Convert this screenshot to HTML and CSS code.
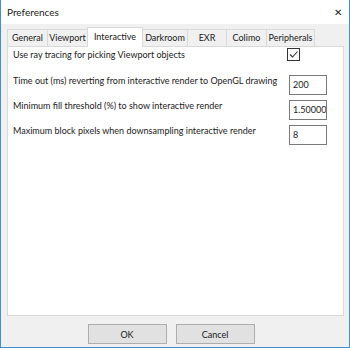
FILE: index.html
```html
<!DOCTYPE html>
<html>
<head>
  <title>Preferences</title>
  <link rel="stylesheet" href="styles.css">
</head>
<body>
  <div class="window">
    <div class="titlebar">
      <span class="title">Preferences</span>
      <span class="close">&#x2715;</span>
    </div>
    <div class="content">
      <div class="tabs">
        <div class="tab t-general">General</div>
        <div class="tab t-viewport">Viewport</div>
        <div class="tab t-interactive active">Interactive</div>
        <div class="tab t-darkroom">Darkroom</div>
        <div class="tab t-exr">EXR</div>
        <div class="tab t-colimo">Colimo</div>
        <div class="tab t-periph">Peripherals</div>
      </div>
      <div class="panel">
        <div class="row row-check">
          <span class="label">Use ray tracing for picking Viewport objects</span>
          <span class="checkbox">
            <svg width="11" height="11" viewBox="0 0 11 11"><path d="M2 5.5 L4.5 8 L9.5 2.5" fill="none" stroke="#333" stroke-width="1.1"/></svg>
          </span>
        </div>
        <div class="row">
          <span class="label">Time out (ms) reverting from interactive render to OpenGL drawing</span>
          <input class="field" type="text" value="200">
        </div>
        <div class="row">
          <span class="label">Minimum fill threshold (%) to show interactive render</span>
          <input class="field" type="text" value="1.500000">
        </div>
        <div class="row">
          <span class="label">Maximum block pixels when downsampling interactive render</span>
          <input class="field" type="text" value="8">
        </div>
      </div>
      <div class="buttons">
        <button class="btn">OK</button>
        <button class="btn">Cancel</button>
      </div>
    </div>
  </div>
</body>
</html>
```

FILE: styles.css
```css
html, body {
  margin: 0;
  padding: 0;
}

body {
  font-family: Lato, "Noto Sans", sans-serif;
  font-size: 9px;
  color: #1a1a1a;
}

.window {
  width: 350px;
  height: 348px;
  box-sizing: border-box;
  border: 1px solid #3f8fd6;
  border-top: none;
  display: flex;
  flex-direction: column;
  background-color: #f0f0f0;
}

.titlebar {
  height: 24px;
  flex-shrink: 0;
  background-color: #ffffff;
  display: flex;
  align-items: center;
  justify-content: space-between;
  padding: 0 7px 0 6px;
  font-size: 10px;
}

.close {
  font-size: 10px;
  color: #222;
}

.content {
  flex: 1;
  padding: 3px 5px 0 6px;
  display: flex;
  flex-direction: column;
}

.tabs {
  display: flex;
  height: 19px;
  flex-shrink: 0;
  align-items: flex-end;
  white-space: nowrap;
}

.tab {
  height: 17px;
  line-height: 16px;
  box-sizing: border-box;
  border-top: 1px solid #d9d9d9;
  border-right: 1px solid #d9d9d9;
  background-color: #f0f0f0;
  text-align: center;
}

.tab:first-child {
  border-left: 1px solid #d9d9d9;
}

.tab.active {
  height: 20px;
  line-height: 17px;
  background-color: #ffffff;
  margin-bottom: -1px;
  margin-left: -1px;
  border-left: 1px solid #d9d9d9;
  position: relative;
}

.t-general { width: 41px; }
.t-viewport { width: 40px; }
.t-interactive { width: 56px; }
.t-darkroom { width: 45px; }
.t-exr { width: 39px; }
.t-colimo { width: 40px; }
.t-periph { width: 48px; }

.panel {
  height: 270px;
  flex-shrink: 0;
  box-sizing: border-box;
  background-color: #ffffff;
  border: 1px solid #d9d9d9;
  padding: 0 16px 0 5px;
  display: flex;
  flex-direction: column;
}

.row {
  display: flex;
  justify-content: space-between;
  align-items: center;
  height: 25px;
  flex-shrink: 0;
  white-space: nowrap;
}

.row-check {
  height: 14px;
  margin-bottom: 11px;
}

.label {
  position: relative;
  top: -4px;
}

.row-check .label {
  top: 0;
}

.checkbox {
  width: 11px;
  height: 11px;
  border: 1px solid #333;
  margin-right: 27px;
  display: flex;
}

.field {
  width: 38px;
  height: 20px;
  box-sizing: border-box;
  border: 1px solid #7a7a7a;
  padding: 0 0 0 3px;
  font-family: Lato, "Noto Sans", sans-serif;
  font-size: 9px;
  color: #1a1a1a;
  outline: none;
}

.buttons {
  display: flex;
  justify-content: center;
  gap: 9px;
  margin-top: 8px;
  padding-right: 9px;
}

.btn {
  width: 79px;
  height: 20px;
  background-color: #e1e1e1;
  border: 1px solid #adadad;
  font-family: Lato, "Noto Sans", sans-serif;
  font-size: 9px;
  color: #1a1a1a;
  padding: 0;
}
```
